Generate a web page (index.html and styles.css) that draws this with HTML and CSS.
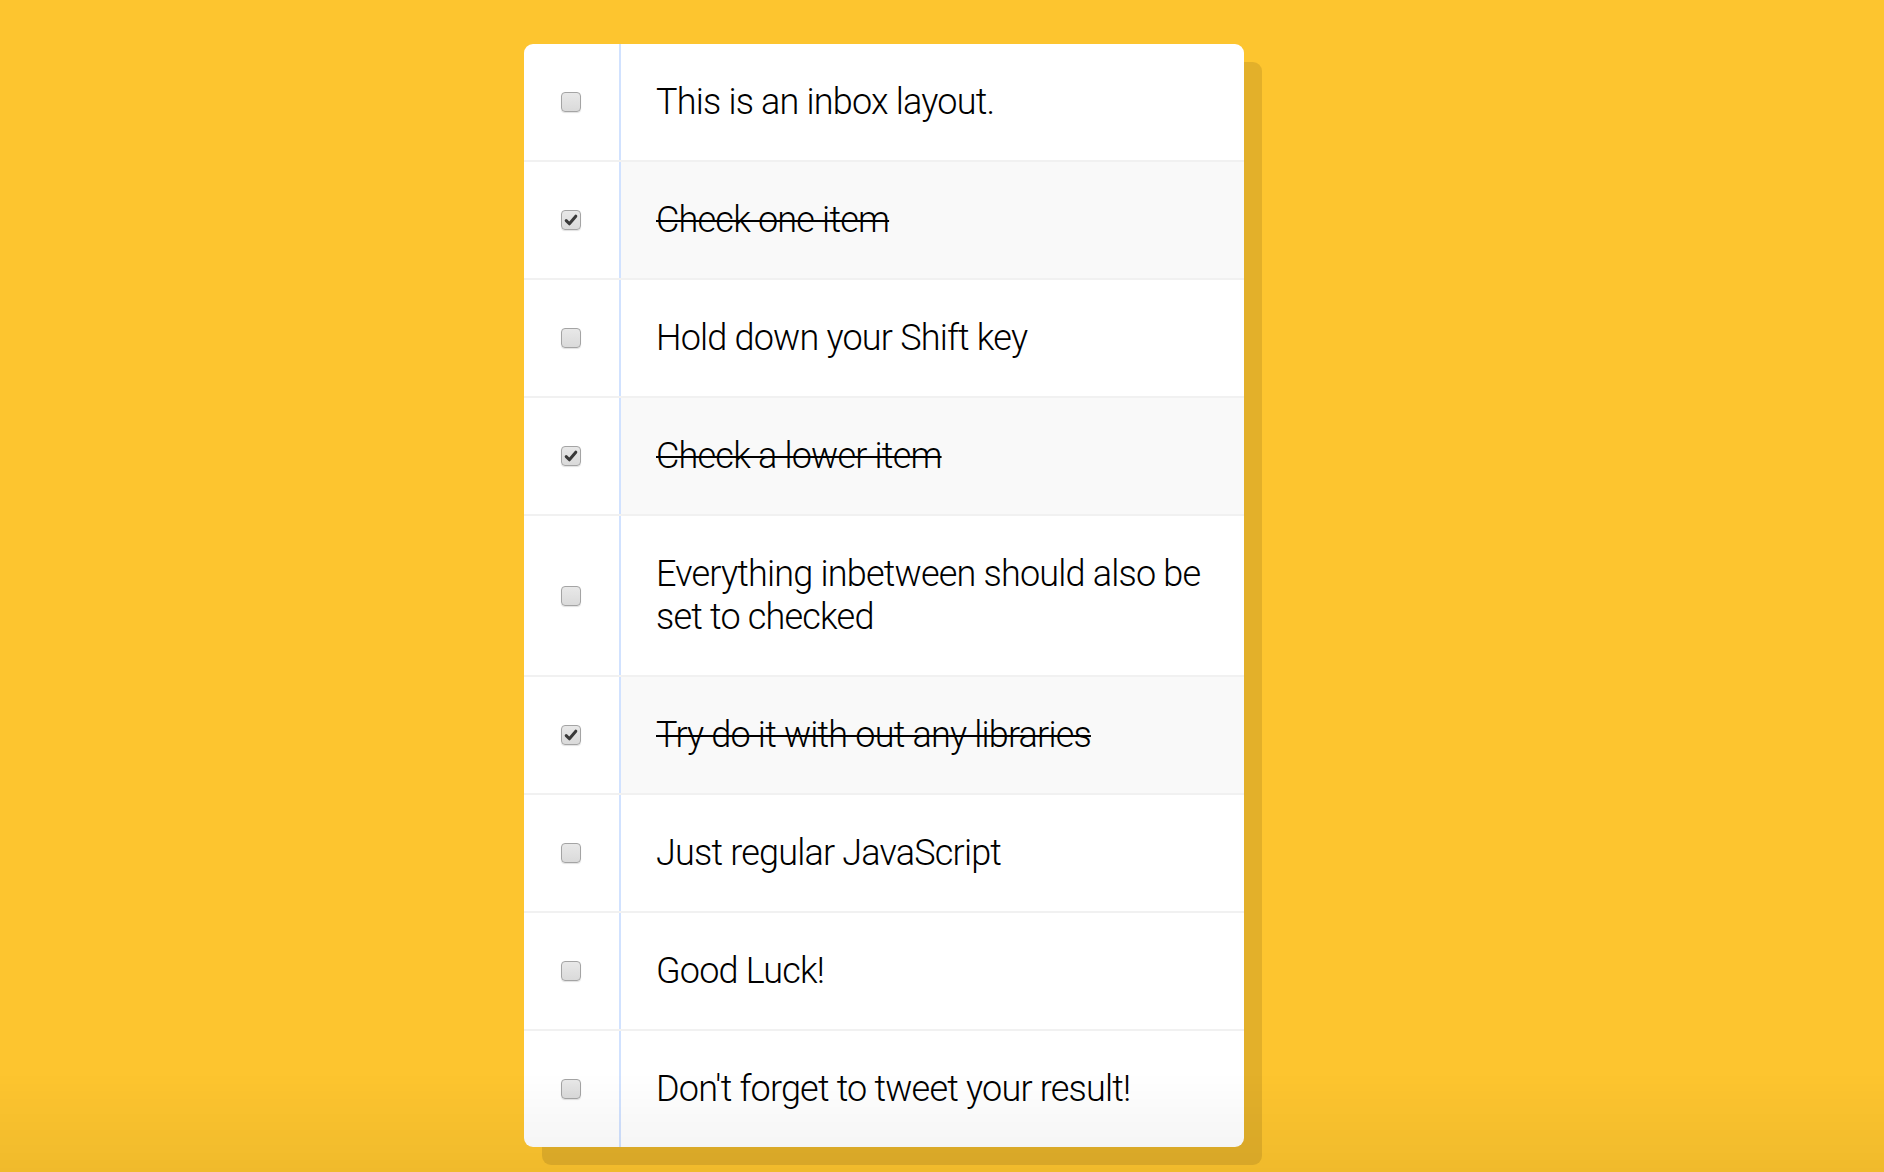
FILE: index.html
```html
<!DOCTYPE html>
<html>
<head>
<meta charset="utf-8">
<title>Hold Shift to Check Multiple Checkboxes</title>
<link rel="stylesheet" href="styles.css">
</head>
<body>
<div class="inbox">
  <div class="item"><span class="box"></span><p>This is an inbox layout.</p></div>
  <div class="item checked"><span class="box"><svg viewBox="0 0 20 20" width="20" height="20"><path d="M5.2 10.6 L8.4 13.8 L14.8 6.2" fill="none" stroke="#3a3a3a" stroke-width="3" stroke-linecap="round" stroke-linejoin="round"/></svg></span><p>Check one item</p></div>
  <div class="item"><span class="box"></span><p>Hold down your Shift key</p></div>
  <div class="item checked"><span class="box"><svg viewBox="0 0 20 20" width="20" height="20"><path d="M5.2 10.6 L8.4 13.8 L14.8 6.2" fill="none" stroke="#3a3a3a" stroke-width="3" stroke-linecap="round" stroke-linejoin="round"/></svg></span><p>Check a lower item</p></div>
  <div class="item"><span class="box"></span><p>Everything inbetween should also be set to checked</p></div>
  <div class="item checked"><span class="box"><svg viewBox="0 0 20 20" width="20" height="20"><path d="M5.2 10.6 L8.4 13.8 L14.8 6.2" fill="none" stroke="#3a3a3a" stroke-width="3" stroke-linecap="round" stroke-linejoin="round"/></svg></span><p>Try do it with out any libraries</p></div>
  <div class="item"><span class="box"></span><p>Just regular JavaScript</p></div>
  <div class="item"><span class="box"></span><p>Good Luck!</p></div>
  <div class="item"><span class="box"></span><p>Don't forget to tweet your result!</p></div>
</div>
<div class="fade"></div>
</body>
</html>
```
FILE: styles.css
```css
html, body {
  margin: 0;
  padding: 0;
}
body {
  background: #fdc52f;
  min-height: 1172px;
  overflow: hidden;
  font-family: Roboto, "Liberation Sans", sans-serif;
}
.inbox {
  width: 720px;
  margin: 44px 0 0 524px;
  background: #fff;
  border-radius: 9px;
  box-shadow: 18px 18px 0 rgba(0, 0, 0, 0.1);
  overflow: hidden;
}
.item {
  display: flex;
  align-items: center;
  border-bottom: 2px solid #f1f1f1;
}
.item:last-child {
  border-bottom: 0;
}
.box {
  flex: none;
  width: 20px;
  height: 20px;
  margin: 0 38px 0 37px;
  box-sizing: border-box;
  border: 1.5px solid #a4a4a4;
  border-radius: 4px;
  background: linear-gradient(#e8e8e8, #dadada);
  box-shadow: 0 1px 1px rgba(0, 0, 0, 0.12);
  display: flex;
  align-items: center;
  justify-content: center;
}
.box svg {
  display: block;
  margin: -1.5px;
}
.item p {
  flex: 1;
  margin: 0;
  padding: 36.5px 36px 36.5px 35px;
  font-size: 36px;
  line-height: 43px;
  font-weight: 300;
  letter-spacing: -0.8px;
  color: #000;
  border-left: 2px solid #d1e2ff;
  align-self: stretch;
}
.item.checked p {
  background: #f9f9f9;
  text-decoration: line-through;
  text-decoration-thickness: 2px;
}
.fade {
  position: fixed;
  left: 0;
  right: 0;
  bottom: 0;
  height: 100px;
  background: linear-gradient(rgba(0, 0, 0, 0), rgba(0, 0, 0, 0.05));
  pointer-events: none;
}
```
